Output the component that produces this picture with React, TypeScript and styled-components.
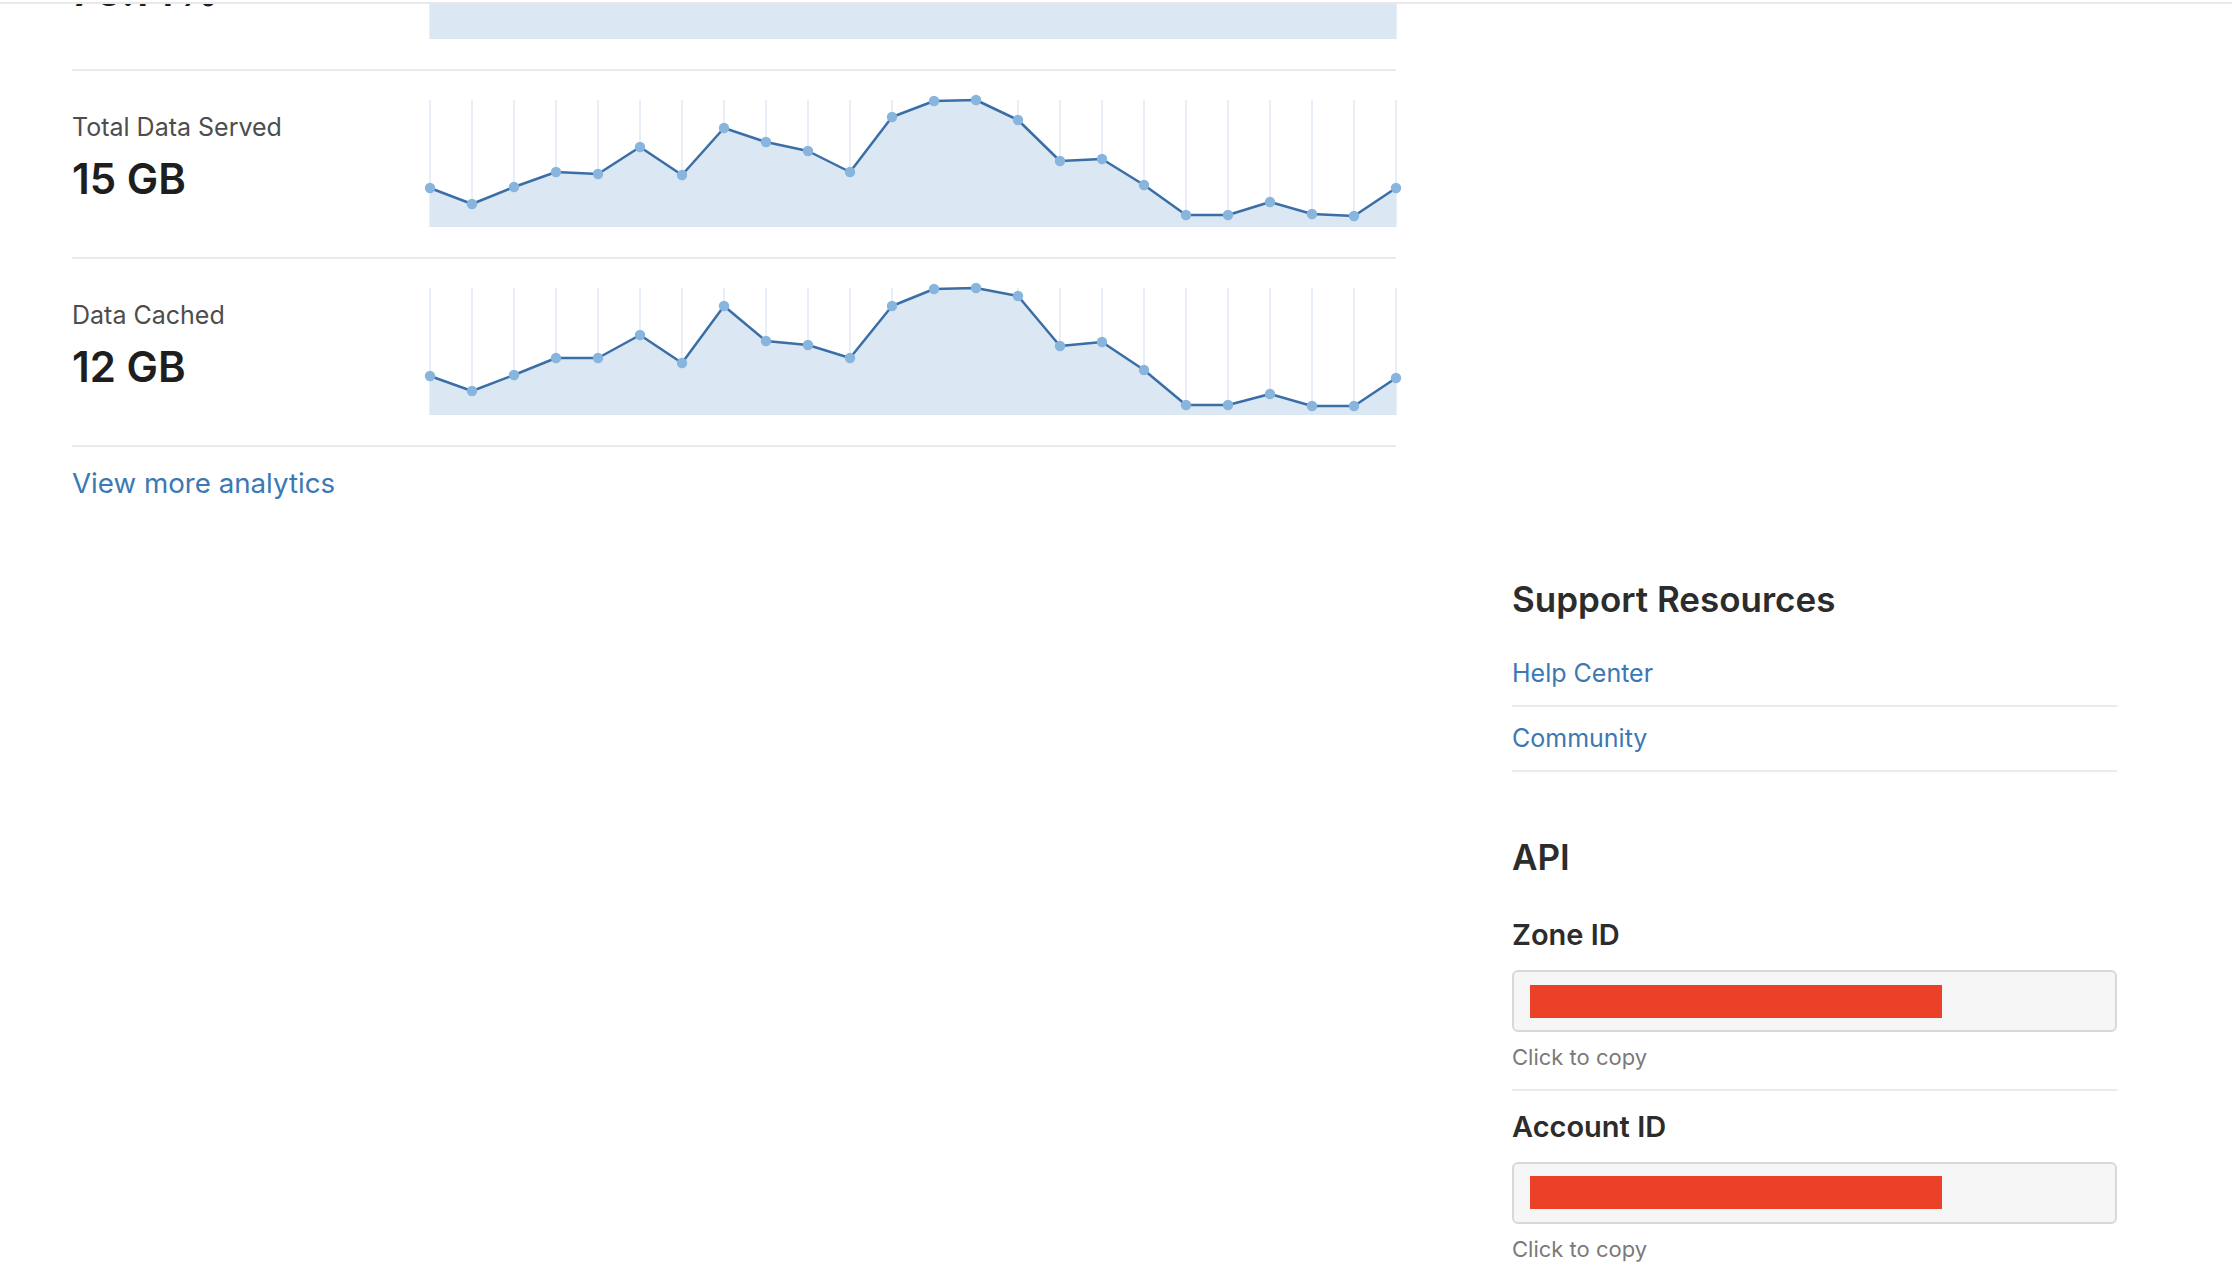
import React from "react";
import styled, { createGlobalStyle } from "styled-components";

const GlobalStyle = createGlobalStyle`
  html, body {
    margin: 0;
    padding: 0;
    background: #ffffff;
  }
  body {
    font-family: Inter, "Noto Sans", "Liberation Sans", sans-serif;
    color: #222;
    -webkit-font-smoothing: antialiased;
  }
  * { box-sizing: border-box; }
`;

const Page = styled.div`
  width: 2232px;
  height: 1280px;
  overflow: hidden;
  display: flex;
  flex-direction: column;
`;

const TopRule = styled.div`
  height: 4px;
  flex: 0 0 auto;
  border-top: 2px solid #ffffff;
  border-bottom: 2px solid #e9e9e9;
`;

const Main = styled.main`
  flex: 1;
  overflow: hidden;
  display: grid;
  grid-template-columns: 1324px 605px;
  column-gap: 116px;
  padding: 0 72px;
  align-items: start;
`;

const LeftCol = styled.section`
  display: flex;
  flex-direction: column;
`;

const StatRow = styled.div<{ $offset?: number }>`
  display: grid;
  grid-template-columns: 358px 966px;
  align-items: start;
  padding: 29px 0 30px;
  border-bottom: 2px solid #ebebeb;
  margin-top: ${(p) => p.$offset ?? 0}px;
`;

const StatText = styled.div`
  display: flex;
  flex-direction: column;
  gap: 12px;
  padding-top: 12px;
`;

const StatLabel = styled.div`
  font-size: 25px;
  line-height: 30px;
  color: #4d4d4d;
  font-weight: 400;
`;

const StatValue = styled.div`
  font-size: 42px;
  line-height: 50px;
  font-weight: 600;
  color: #1e1e1e;
`;

const ChartSvg = styled.svg`
  display: block;
  overflow: visible;
`;

const MoreLink = styled.a`
  margin-top: 19.5px;
  font-size: 27.7px;
  line-height: 33px;
  color: #3b78b4;
  text-decoration: none;
  align-self: flex-start;
`;

const RightCol = styled.aside`
  display: flex;
  flex-direction: column;
  padding-top: 573.5px;
`;

const SectionTitle = styled.h2<{ $gap?: number }>`
  margin: ${(p) => p.$gap ?? 0}px 0 0;
  font-size: 35px;
  line-height: 42px;
  font-weight: 600;
  color: #2c2c2c;
`;

const LinkList = styled.ul`
  list-style: none;
  margin: 22.5px 0 0;
  padding: 0;
`;

const LinkItem = styled.li`
  padding: 15.5px 0 17.5px;
  border-bottom: 2px solid #ebebeb;
`;

const ResourceLink = styled.a`
  font-size: 25px;
  line-height: 30px;
  color: #3b78b4;
  text-decoration: none;
  display: block;
`;

const Field = styled.div<{ $first?: boolean }>`
  display: flex;
  flex-direction: column;
  margin-top: ${(p) => (p.$first ? 39.5 : 0)}px;
  padding-top: ${(p) => (p.$first ? 0 : 18)}px;
  padding-bottom: ${(p) => (p.$first ? 18.5 : 0)}px;
  border-bottom: ${(p) => (p.$first ? "2px solid #ebebeb" : "none")};
`;

const FieldLabel = styled.div`
  font-size: 29px;
  line-height: 35px;
  font-weight: 600;
  color: #2c2c2c;
`;

const CopyBox = styled.button`
  margin-top: 18px;
  height: 62px;
  width: 100%;
  display: flex;
  align-items: center;
  padding: 0 16px;
  background: #f6f6f6;
  border: 2px solid #d8d8d8;
  border-radius: 6px;
  cursor: pointer;
`;

const Redacted = styled.span`
  display: block;
  width: 412px;
  height: 33px;
  background: #ea4128;
`;

const Hint = styled.div`
  margin-top: 12px;
  font-size: 22px;
  line-height: 26px;
  color: #7a7a7a;
`;

const CHART_W = 966;
const CHART_H = 127;

function Sparkline({ points }: { points: number[] }) {
  const step = CHART_W / (points.length - 1);
  const coords = points.map((y, i) => [i * step, y] as const);
  const line = coords.map(([x, y]) => `${x.toFixed(1)},${y}`).join(" ");
  const area =
    `M0,${CHART_H} ` +
    coords.map(([x, y]) => `L${x.toFixed(1)},${y}`).join(" ") +
    ` L${CHART_W},${CHART_H} Z`;
  return (
    <ChartSvg width={CHART_W} height={CHART_H} viewBox={`0 0 ${CHART_W} ${CHART_H}`}>
      {coords.map(([x], i) => (
        <line key={`g${i}`} x1={x} y1={0} x2={x} y2={CHART_H} stroke="#e8eff7" strokeWidth={2} />
      ))}
      <path d={area} fill="#dbe7f2" />
      <polyline points={line} fill="none" stroke="#3a6ea6" strokeWidth={2.5} strokeLinejoin="round" />
      {coords.map(([x, y], i) => (
        <circle key={`d${i}`} cx={x} cy={y} r={5.2} fill="#87b5dd" />
      ))}
    </ChartSvg>
  );
}

const stats = [
  {
    label: "Percent Cached",
    value: "75.14%",
    points: [60, 52, 58, 44, 40, 35, 48, 30, 38, 42, 46, 28, 22, 20, 30, 44, 40, 52, 62, 60, 55, 58, 64, 50],
  },
  {
    label: "Total Data Served",
    value: "15 GB",
    points: [88, 104, 87, 72, 74, 47, 75, 28, 42, 51, 72, 17, 1, 0, 20, 61, 59, 85, 115, 115, 102, 114, 116, 88],
  },
  {
    label: "Data Cached",
    value: "12 GB",
    points: [88, 103, 87, 70, 70, 47, 75, 18, 53, 57, 70, 18, 1, 0, 8, 58, 54, 82, 117, 117, 106, 118, 118, 90],
  },
];

export default function App() {
  return (
    <>
      <GlobalStyle />
      <Page>
        <TopRule />
        <Main>
          <LeftCol>
            {stats.map((s, i) => (
              <StatRow key={s.label} $offset={i === 0 ? -121 : 0}>
                <StatText>
                  <StatLabel>{s.label}</StatLabel>
                  <StatValue>{s.value}</StatValue>
                </StatText>
                <Sparkline points={s.points} />
              </StatRow>
            ))}
            <MoreLink href="#">View more analytics</MoreLink>
          </LeftCol>
          <RightCol>
            <SectionTitle>Support Resources</SectionTitle>
            <LinkList>
              <LinkItem>
                <ResourceLink href="#">Help Center</ResourceLink>
              </LinkItem>
              <LinkItem>
                <ResourceLink href="#">Community</ResourceLink>
              </LinkItem>
            </LinkList>
            <SectionTitle $gap={63.5}>API</SectionTitle>
            <Field $first>
              <FieldLabel>Zone ID</FieldLabel>
              <CopyBox type="button" aria-label="Copy Zone ID">
                <Redacted />
              </CopyBox>
              <Hint>Click to copy</Hint>
            </Field>
            <Field>
              <FieldLabel>Account ID</FieldLabel>
              <CopyBox type="button" aria-label="Copy Account ID">
                <Redacted />
              </CopyBox>
              <Hint>Click to copy</Hint>
            </Field>
          </RightCol>
        </Main>
      </Page>
    </>
  );
}
